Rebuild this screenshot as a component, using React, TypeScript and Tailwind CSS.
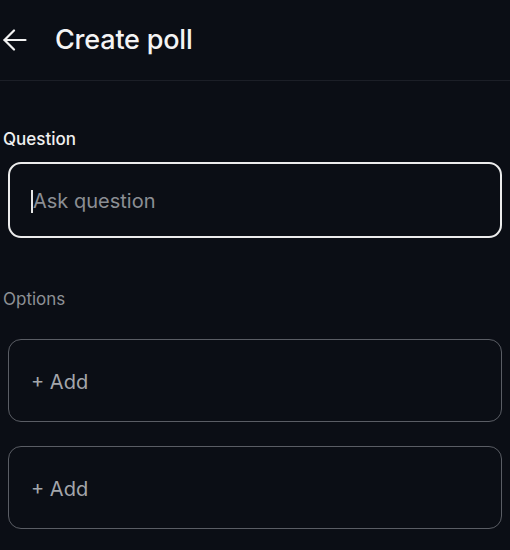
import React from "react";

function BackArrow() {
  return (
    <svg width="24" height="22" viewBox="0 0 24 22" fill="none" stroke="#f2f2f2" strokeWidth="2.2" strokeLinecap="round" strokeLinejoin="round">
      <path d="M22.5 11H1.5" />
      <path d="M11 1.5 1.5 11l9.5 9.5" />
    </svg>
  );
}

function AddOption() {
  return (
    <div className="mx-[8px] flex h-[83px] items-center rounded-[13px] border-[1.5px] border-[#5a5d64] pl-[22px] pt-[2px]">
      <span className="text-[20px] leading-[24px] text-[#a4a6ab]">+ Add</span>
    </div>
  );
}

export default function App() {
  return (
    <div className="min-h-[550px] w-full bg-[#0b0e15] font-['Inter',sans-serif]">
      {/* Header */}
      <div className="flex h-[81px] items-center border-b border-[#1c1f27] pl-[3px]">
        <BackArrow />
        <h1 className="ml-[28px] text-[27px] font-medium leading-[30px] tracking-[-0.2px] text-[#f4f4f4]">Create poll</h1>
      </div>

      <div className="pt-[48px]">
        <p className="pl-[3px] text-[17px] font-medium leading-[20px] text-[#f0f0f0]">Question</p>

        <div className="mx-[8px] mt-[13px] flex h-[76px] items-center rounded-[13px] border-[2.5px] border-[#ececec] pl-[21px] pt-[2px]">
          <span className="h-[23px] w-[2px] bg-[#e6e6e6]" />
          <span className="text-[20px] leading-[24px] text-[#8b8e94]">Ask question</span>
        </div>

        <p className="mt-[51px] pl-[3px] text-[17px] leading-[20px] text-[#8e9196]">Options</p>

        <div className="mt-[30px] flex flex-col gap-[24px]">
          <AddOption />
          <AddOption />
        </div>
      </div>
    </div>
  );
}
